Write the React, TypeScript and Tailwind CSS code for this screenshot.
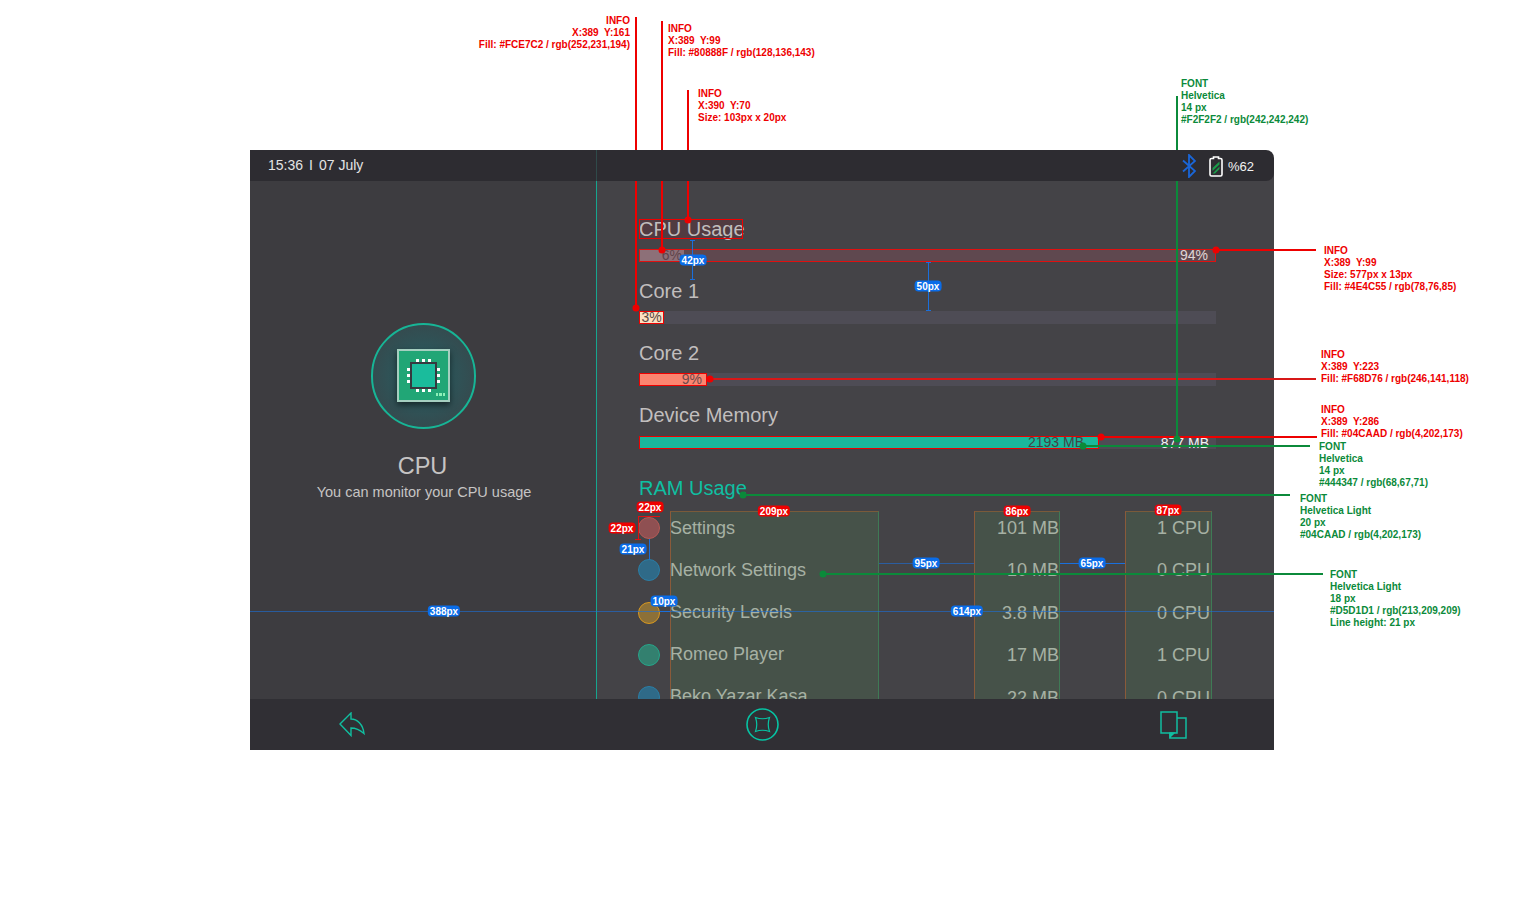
import React from "react";

const rows = [
  { name: "Settings", mb: "101 MB", cpu: "1 CPU", dot: "bg-[#8f5052] border-[#b65a55]" },
  { name: "Network Settings", mb: "10 MB", cpu: "0 CPU", dot: "bg-[#2f6a88] border-[#2b7ea6]" },
  { name: "Security Levels", mb: "3.8 MB", cpu: "0 CPU", dot: "bg-[#8c7038] border-[#d8981f]" },
  { name: "Romeo Player", mb: "17 MB", cpu: "1 CPU", dot: "bg-[#33806f] border-[#26a68a]" },
  { name: "Beko Yazar Kasa", mb: "22 MB", cpu: "0 CPU", dot: "bg-[#2f6a88] border-[#2b7ea6]" },
];

function Title({ children, className = "" }: { children: React.ReactNode; className?: string }) {
  return <div className={`h-5 leading-5 text-[20px] whitespace-nowrap ${className}`}>{children}</div>;
}

function Chip() {
  return (
    <svg width="54" height="56" viewBox="0 0 54 56" className="drop-shadow-[0_3px_3px_rgba(0,0,0,0.55)]">
      <rect x="1" y="1" width="51" height="51" fill="#21a676" stroke="#a5cfc0" strokeWidth="2" />
      <rect x="14" y="14" width="25" height="25" fill="#1abc9c" stroke="#37393f" strokeWidth="2" />
      <g fill="#ffffff">
        <rect x="19" y="10" width="3" height="3" /><rect x="25" y="10" width="3" height="3" /><rect x="31" y="10" width="3" height="3" />
        <rect x="19" y="40" width="3" height="3" /><rect x="25" y="40" width="3" height="3" /><rect x="31" y="40" width="3" height="3" />
        <rect x="10" y="19" width="3" height="3" /><rect x="10" y="25" width="3" height="3" /><rect x="10" y="31" width="3" height="3" />
        <rect x="40" y="19" width="3" height="3" /><rect x="40" y="25" width="3" height="3" /><rect x="40" y="31" width="3" height="3" />
      </g>
      <g fill="#8df0b8">
        <rect x="39" y="44" width="2" height="3" /><rect x="42" y="44" width="3" height="3" /><rect x="46" y="44" width="2" height="3" />
      </g>
    </svg>
  );
}

function Bluetooth() {
  return (
    <svg width="14" height="24" viewBox="0 0 14 24" fill="none" stroke="#1a66d8" strokeWidth="1.8">
      <path d="M1 6.5 L13 17 L7 23 V1 L13 7 L1 17.5" />
    </svg>
  );
}

function Battery() {
  return (
    <svg width="14" height="21" viewBox="0 0 14 21" fill="none">
      <path d="M4.5 1 H9.5 V2.5 H11.5 Q13 2.5 13 4 V18.5 Q13 20 11.5 20 H2.5 Q1 20 1 18.5 V4 Q1 2.5 2.5 2.5 H4.5 Z" stroke="#ffffff" strokeWidth="1.6" fill="#2d2c31" />
      <path d="M3.5 12 L10.5 5.5 V8.5 L3.5 15 Z M3.5 17.5 L10.5 10.5 V13 L6 17.5 Z" fill="#1b9b4a" />
    </svg>
  );
}

function BackIcon() {
  return (
    <svg width="26" height="25" viewBox="0 0 26 25" fill="none" stroke="#10bfa0" strokeWidth="1.4">
      <path d="M1 12 L12 1 V7 C18 7 24 12 25 21.5 C21 18 16 16 12 16 V23.5 Z" strokeLinejoin="miter" />
    </svg>
  );
}

function HomeIcon() {
  return (
    <svg width="33" height="33" viewBox="-16.5 -16.5 33 33" fill="none" stroke="#06c3a3">
      <circle r="15.5" strokeWidth="1.6" />
      <path d="M-7 -7 Q0 -4.5 7 -7 Q4.5 0 7 7 Q0 4.5 -7 7 Q-4.5 0 -7 -7 Z" strokeWidth="1.2" />
    </svg>
  );
}

function CopyIcon() {
  return (
    <svg width="27" height="28" viewBox="0 0 27 28" fill="none" stroke="#10bfa0" strokeWidth="1.5">
      <rect x="1" y="1" width="16" height="21" />
      <path d="M17 7 H26 V27 H10 V22" />
      <path d="M10 22 H14 L10 26 Z" fill="#10bfa0" />
    </svg>
  );
}

function Note({ className, lines }: { className: string; lines: string[] }) {
  return (
    <div className={`absolute text-[10px] leading-3 font-bold whitespace-pre ${className}`}>
      {lines.map((l) => (
        <div key={l}>{l}</div>
      ))}
    </div>
  );
}

function Pill({ className, children }: { className: string; children: string }) {
  return (
    <div className={`absolute -translate-x-1/2 -translate-y-1/2 px-[2px] rounded-[4px] text-[10px] leading-[11px] font-bold text-white ${className}`}>
      {children}
    </div>
  );
}

function Dot({ className }: { className: string }) {
  return <div className={`absolute w-[7px] h-[7px] rounded-full -translate-x-1/2 -translate-y-1/2 ${className}`} />;
}

function Line({ className }: { className: string }) {
  return <div className={`absolute ${className}`} />;
}

function Overlay() {
  const red = "bg-[#ee0000]";
  const green = "bg-[#0b8a3a]";
  const blue = "bg-[#1a6fdc]";
  const pr = "bg-[#ee0000]";
  const pb = "bg-[#0a6ce8]";
  const region = "bg-[#4a8050]/25 border border-[#3f7a55] border-l-[#8a5a3a] border-t-[#7a5a3a] border-b-0";
  return (
    <>
      {/* measured regions */}
      <Line className={`left-[670px] top-[511px] w-[209px] h-[188px] ${region}`} />
      <Line className={`left-[974px] top-[511px] w-[86px] h-[188px] ${region}`} />
      <Line className={`left-[1125px] top-[511px] w-[87px] h-[188px] ${region}`} />

      {/* red leaders */}
      <Line className={`left-[635px] top-[17px] w-[2px] h-[291px] ${red}`} />
      <Dot className={`left-[636px] top-[308px] ${red}`} />
      <Line className={`left-[661px] top-[21px] w-[2px] h-[229px] ${red}`} />
      <Dot className={`left-[662px] top-[250px] ${red}`} />
      <Line className={`left-[687px] top-[90px] w-[2px] h-[130px] ${red}`} />
      <Dot className={`left-[688px] top-[220px] ${red}`} />
      <Line className={`left-[1216px] top-[249px] w-[100px] h-[2px] ${red}`} />
      <Dot className={`left-[1216px] top-[250px] ${red}`} />
      <Line className={`left-[709px] top-[378px] w-[607px] h-[2px] bg-[#d81818]`} />
      <Dot className={`left-[710px] top-[379px] ${red}`} />
      <Line className={`left-[1100px] top-[436px] w-[217px] h-[2px] ${red}`} />
      <Dot className={`left-[1101px] top-[437px] ${red}`} />

      {/* green leaders */}
      <Line className={`left-[1176px] top-[96px] w-[2px] h-[343px] ${green}`} />
      <Dot className={`left-[1177px] top-[439px] ${green}`} />
      <Line className={`left-[1083px] top-[445px] w-[227px] h-[2px] ${green}`} />
      <Dot className={`left-[1083px] top-[446px] ${green}`} />
      <Line className={`left-[743px] top-[494px] w-[547px] h-[2px] ${green}`} />
      <Dot className={`left-[743px] top-[495px] ${green}`} />
      <Line className={`left-[823px] top-[573px] w-[500px] h-[2px] ${green}`} />
      <Dot className={`left-[823px] top-[574px] ${green}`} />

      {/* blue measures */}
      <Line className="left-[250px] top-[611px] w-[1024px] h-px bg-[#1a6fdc]/60" />
      <Line className={`left-[692px] top-[240px] w-px h-[40px] ${blue}`} />
      <Line className={`left-[690px] top-[240px] w-[5px] h-px ${blue}`} />
      <Line className={`left-[690px] top-[279px] w-[5px] h-px ${blue}`} />
      <Line className={`left-[928px] top-[262px] w-px h-[48px] ${blue}`} />
      <Line className={`left-[926px] top-[262px] w-[5px] h-px ${blue}`} />
      <Line className={`left-[926px] top-[310px] w-[5px] h-px ${blue}`} />
      <Line className="left-[879px] top-[563px] w-[95px] h-px bg-[#1a6fdc]/60" />
      <Line className={`left-[1060px] top-[563px] w-[65px] h-px ${blue}`} />
      <Line className={`left-[649px] top-[539px] w-px h-[21px] ${blue}`} />
      <Line className={`left-[660px] top-[611px] w-[10px] h-px ${blue}`} />

      {/* red size ticks */}
      <Line className="left-[638px] top-[516px] w-[22px] h-px bg-[#e01010]" />
      <Line className="left-[638px] top-[516px] w-px h-[23px] bg-[#e01010]" />
      <Line className="left-[635px] top-[539px] w-[6px] h-px bg-[#e01010]" />

      <Pill className={`left-[650px] top-[507px] ${pr}`}>22px</Pill>
      <Pill className={`left-[622px] top-[528px] ${pr}`}>22px</Pill>
      <Pill className={`left-[774px] top-[511px] ${pr}`}>209px</Pill>
      <Pill className={`left-[1017px] top-[511px] ${pr}`}>86px</Pill>
      <Pill className={`left-[1168px] top-[510px] ${pr}`}>87px</Pill>
      <Pill className={`left-[693px] top-[260px] ${pb}`}>42px</Pill>
      <Pill className={`left-[928px] top-[286px] ${pb}`}>50px</Pill>
      <Pill className={`left-[926px] top-[563px] ${pb}`}>95px</Pill>
      <Pill className={`left-[1092px] top-[563px] ${pb}`}>65px</Pill>
      <Pill className={`left-[633px] top-[549px] ${pb}`}>21px</Pill>
      <Pill className={`left-[664px] top-[601px] ${pb}`}>10px</Pill>
      <Pill className={`left-[444px] top-[611px] ${pb}`}>388px</Pill>
      <Pill className={`left-[967px] top-[611px] ${pb}`}>614px</Pill>

      <Note className="right-[894px] top-[15px] text-right text-[#ee0000]" lines={["INFO", "X:389  Y:161", "Fill: #FCE7C2 / rgb(252,231,194)"]} />
      <Note className="left-[668px] top-[23px] text-[#ee0000]" lines={["INFO", "X:389  Y:99", "Fill: #80888F / rgb(128,136,143)"]} />
      <Note className="left-[698px] top-[88px] text-[#ee0000]" lines={["INFO", "X:390  Y:70", "Size: 103px x 20px"]} />
      <Note className="left-[1181px] top-[78px] text-[#0b8a3a]" lines={["FONT", "Helvetica", "14 px", "#F2F2F2 / rgb(242,242,242)"]} />
      <Note className="left-[1324px] top-[245px] text-[#ee0000]" lines={["INFO", "X:389  Y:99", "Size: 577px x 13px", "Fill: #4E4C55 / rgb(78,76,85)"]} />
      <Note className="left-[1321px] top-[349px] text-[#ee0000]" lines={["INFO", "X:389  Y:223", "Fill: #F68D76 / rgb(246,141,118)"]} />
      <Note className="left-[1321px] top-[404px] text-[#ee0000]" lines={["INFO", "X:389  Y:286", "Fill: #04CAAD / rgb(4,202,173)"]} />
      <Note className="left-[1319px] top-[441px] text-[#0b8a3a]" lines={["FONT", "Helvetica", "14 px", "#444347 / rgb(68,67,71)"]} />
      <Note className="left-[1300px] top-[493px] text-[#0b8a3a]" lines={["FONT", "Helvetica Light", "20 px", "#04CAAD / rgb(4,202,173)"]} />
      <Note className="left-[1330px] top-[569px] text-[#0b8a3a]" lines={["FONT", "Helvetica Light", "18 px", "#D5D1D1 / rgb(213,209,209)", "Line height: 21 px"]} />
    </>
  );
}

export default function App() {
  return (
    <div className="relative w-[1524px] h-[900px] bg-white overflow-hidden font-['Liberation_Sans',Arial,sans-serif]">
      <div className="pl-[250px] pt-[150px]">
        <div className="w-[1024px] h-[600px] flex flex-col">
          <div className="relative z-10 h-[31px] shrink-0 flex bg-[#2d2c31] rounded-r-[8px] text-[#e4e4e4]">
            <div className="w-[347px] border-r border-[#2f4a4a] pl-[18px] flex items-center gap-[6px] text-[14px]">
              <span>15:36</span>
              <span>I</span>
              <span>07 July</span>
            </div>
            <div className="flex-1 flex items-center justify-end pr-[20px] text-[13px] text-[#f2f2f2]">
              <Bluetooth />
              <div className="ml-[13px] mr-[5px] mt-[1px] flex"><Battery /></div>
              <span className="mt-[2px]">%62</span>
            </div>
          </div>

          <div className="flex-1 min-h-0 -mt-[8px] flex overflow-hidden bg-[#444347]">
            <div className="w-[347px] shrink-0 bg-[#3d3c40] border-r border-[#16a58f] flex flex-col items-center pt-[150px] text-[#cfcccc]">
              <div className="w-[105px] h-[106px] shrink-0 rounded-full border-2 border-[#17b596] bg-[radial-gradient(circle,#2c6a6e_0%,#2f5357_45%,#3a4347_100%)] flex items-center justify-center">
                <div className="flex pt-[2px] pl-[1px]"><Chip /></div>
              </div>
              <div className="mt-[23px] text-[23.5px] leading-7 text-[#c6c4c4] -ml-[1px]">CPU</div>
              <div className="mt-[3px] text-[14.5px] leading-[18px] text-[#c6c4c4] ml-[2px]">You can monitor your CPU usage</div>
            </div>

            <div className="flex-1 min-w-0 pl-[42px] pr-[58px] pt-[46px] text-[#c1bebe]">
              <Title className="w-[104px] outline -outline-offset-1 outline-[#ee0000] bg-[#553a40]/80">CPU Usage</Title>
              <div className="mt-[10px] h-[13px] flex bg-[#5f484f] outline -outline-offset-1 outline-[#e01010] text-[14px] leading-[13px]">
                <div className="w-[45px] shrink-0 bg-[#8d7078] text-right pr-[2px] text-[#5e444b]">6%</div>
                <div className="flex-1 text-right pr-[8px] text-[#e0d6d6]">94%</div>
              </div>

              <Title className="mt-[19px]">Core 1</Title>
              <div className="mt-[10px] h-[13px] flex bg-[#4e4c55] text-[14px] leading-[13px]">
                <div className="w-[25px] shrink-0 bg-[#fce0c2] outline -outline-offset-1 outline-[#ee0000] text-center text-[#5a4a45]">3%</div>
              </div>

              <Title className="mt-[19px]">Core 2</Title>
              <div className="mt-[10px] h-[13px] flex bg-[#4e4c55] text-[14px] leading-[13px]">
                <div className="w-[68px] shrink-0 bg-[#fb8570] outline -outline-offset-1 outline-[#ee0000] text-right pr-[5px] text-[#6b4a4c]">9%</div>
              </div>

              <Title className="mt-[19px]">Device Memory</Title>
              <div className="mt-[11px] h-[13px] flex bg-[#4e4c55] text-[14px] leading-[13px] overflow-hidden">
                <div className="w-[460px] shrink-0 bg-[#1ab89c] text-right pr-[15px] text-[#444347] outline -outline-offset-1 outline-[#ee0000]">2193 MB</div>
                <div className="flex-1 text-right pr-[7px] pt-[1px] text-[#f2f2f2]">877 MB</div>
              </div>

              <Title className="mt-[29px] text-[#0fbfa2]">RAM Usage</Title>

              <div className="mt-[9px] mr-[6px] -ml-[1px] flex text-[18px] leading-[21px] text-[#c4c2c0] whitespace-nowrap">
                <div className="flex flex-col w-[22px] shrink-0">
                  {rows.map((r) => (
                    <div key={r.name} className="h-[42.25px] shrink-0 flex items-center">
                      <div className={`w-[22px] h-[22px] shrink-0 rounded-full border ${r.dot}`} />
                    </div>
                  ))}
                </div>
                <div className="flex flex-col ml-[10px] flex-1">
                  {rows.map((r) => (
                    <div key={r.name} className="h-[42px] shrink-0 flex items-center">{r.name}</div>
                  ))}
                </div>
                <div className="flex flex-col w-[100px] shrink-0 items-end">
                  {rows.map((r) => (
                    <div key={r.name} className="h-[42.5px] shrink-0 flex items-center">{r.mb}</div>
                  ))}
                </div>
                <div className="flex flex-col w-[151px] shrink-0 items-end">
                  {rows.map((r) => (
                    <div key={r.name} className="h-[42.5px] shrink-0 flex items-center">{r.cpu}</div>
                  ))}
                </div>
              </div>
            </div>
          </div>

          <div className="relative z-10 h-[51px] shrink-0 bg-[#302f34] flex items-center justify-between pl-[89px] pr-[87px]">
            <BackIcon />
            <HomeIcon />
            <CopyIcon />
          </div>
        </div>
      </div>
      <Overlay />
    </div>
  );
}
